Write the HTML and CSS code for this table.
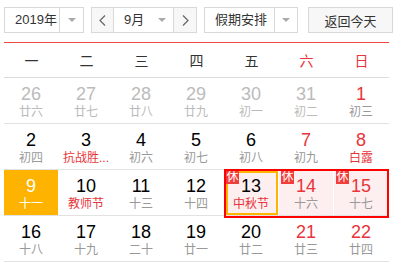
FILE: index.html
```html
<!DOCTYPE html>
<html lang="zh-CN">
<head>
<meta charset="utf-8">
<title>万年历</title>
<link rel="stylesheet" href="styles.css">
</head>
<body>
<div class="cal">
  <div class="toolbar">
    <div class="select year">
      <span class="sel-text">2019年</span>
      <span class="sel-arrow"><i class="tri"></i></span>
    </div>
    <div class="month-group">
      <span class="nav prev"><svg width="7" height="11" viewBox="0 0 7 11"><polyline points="6,0.5 1,5.5 6,10.5" fill="none" stroke="#666" stroke-width="1.2"/></svg></span>
      <span class="month">
        <span class="sel-text">9月</span>
        <span class="sel-arrow plain"><i class="tri"></i></span>
      </span>
      <span class="nav next"><svg width="7" height="11" viewBox="0 0 7 11"><polyline points="1,0.5 6,5.5 1,10.5" fill="none" stroke="#666" stroke-width="1.2"/></svg></span>
    </div>
    <div class="select holiday">
      <span class="sel-text">假期安排</span>
      <span class="sel-arrow"><i class="tri"></i></span>
    </div>
    <button class="today-btn">返回今天</button>
  </div>

  <div class="weekdays">
    <span>一</span><span>二</span><span>三</span><span>四</span><span>五</span><span class="wk-red">六</span><span class="wk-red">日</span>
  </div>

  <div class="week">
    <div class="cell other"><div class="num">26</div><div class="lunar">廿六</div></div>
    <div class="cell other"><div class="num">27</div><div class="lunar">廿七</div></div>
    <div class="cell other"><div class="num">28</div><div class="lunar">廿八</div></div>
    <div class="cell other"><div class="num">29</div><div class="lunar">廿九</div></div>
    <div class="cell other"><div class="num">30</div><div class="lunar">初一</div></div>
    <div class="cell other"><div class="num">31</div><div class="lunar">初二</div></div>
    <div class="cell weekend"><div class="num">1</div><div class="lunar">初三</div></div>
  </div>

  <div class="week">
    <div class="cell"><div class="num">2</div><div class="lunar">初四</div></div>
    <div class="cell"><div class="num">3</div><div class="lunar fest">抗战胜...</div></div>
    <div class="cell"><div class="num">4</div><div class="lunar">初六</div></div>
    <div class="cell"><div class="num">5</div><div class="lunar">初七</div></div>
    <div class="cell"><div class="num">6</div><div class="lunar">初八</div></div>
    <div class="cell weekend"><div class="num">7</div><div class="lunar">初九</div></div>
    <div class="cell weekend"><div class="num">8</div><div class="lunar fest">白露</div></div>
  </div>

  <div class="week">
    <div class="cell today"><div class="num">9</div><div class="lunar">十一</div></div>
    <div class="cell"><div class="num">10</div><div class="lunar fest">教师节</div></div>
    <div class="cell"><div class="num">11</div><div class="lunar">十三</div></div>
    <div class="cell"><div class="num">12</div><div class="lunar">十四</div></div>
    <div class="cell rest selected"><span class="badge">休</span><div class="num">13</div><div class="lunar fest">中秋节</div></div>
    <div class="cell rest weekend"><span class="badge">休</span><div class="num">14</div><div class="lunar">十六</div></div>
    <div class="cell rest weekend"><span class="badge">休</span><div class="num">15</div><div class="lunar">十七</div></div>
    <div class="range"></div>
  </div>

  <div class="week">
    <div class="cell"><div class="num">16</div><div class="lunar">十八</div></div>
    <div class="cell"><div class="num">17</div><div class="lunar">十九</div></div>
    <div class="cell"><div class="num">18</div><div class="lunar">二十</div></div>
    <div class="cell"><div class="num">19</div><div class="lunar">廿一</div></div>
    <div class="cell"><div class="num">20</div><div class="lunar">廿二</div></div>
    <div class="cell weekend"><div class="num">21</div><div class="lunar">廿三</div></div>
    <div class="cell weekend"><div class="num">22</div><div class="lunar">廿四</div></div>
  </div>
</div>
</body>
</html>
```

FILE: styles.css
```css
* {
  box-sizing: border-box;
  margin: 0;
  padding: 0;
}

body {
  font-family: Arial, "Liberation Sans", "Noto Sans CJK SC", sans-serif;
  background: #fff;
  color: #333;
  width: 393px;
  height: 263px;
  overflow: hidden;
}

.cal {
  padding: 7px 0 0 4px;
}

/* toolbar */
.toolbar {
  display: flex;
  height: 26px;
  font-size: 13px;
  line-height: 24px;
  color: #333;
}

.select {
  display: flex;
  height: 26px;
  border: 1px solid #d8d8d8;
  background: #fff;
}

.sel-text {
  flex: 1;
  padding-left: 10px;
  white-space: nowrap;
}

.sel-arrow {
  display: flex;
  align-items: center;
  justify-content: center;
  border-left: 1px solid #d8d8d8;
}

.sel-arrow.plain {
  border-left: 0;
  width: 22px;
}

.tri {
  display: block;
  width: 0;
  height: 0;
  border-left: 4px solid transparent;
  border-right: 4px solid transparent;
  border-top: 4px solid #aaa;
}

.year {
  width: 80px;
}

.year .sel-arrow {
  width: 24px;
}

.month-group {
  display: flex;
  margin-left: 7px;
  width: 106px;
  height: 26px;
  border: 1px solid #d8d8d8;
}

.nav {
  display: flex;
  align-items: center;
  justify-content: center;
  background: #f7f7f7;
}

.prev {
  width: 22px;
  border-right: 1px solid #d8d8d8;
}

.next {
  width: 23px;
  border-left: 1px solid #d8d8d8;
}

.month {
  display: flex;
  width: 59px;
  background: #fff;
}

.holiday {
  margin-left: 7px;
  width: 94px;
}

.holiday .sel-arrow {
  width: 23px;
}

.today-btn {
  margin-left: 10px;
  width: 85px;
  height: 26px;
  border: 1px solid #d8d8d8;
  background: #f7f7f7;
  font-family: inherit;
  font-size: 13px;
  color: #333;
  cursor: pointer;
}

/* weekday header */
.weekdays {
  margin-top: 9px;
  width: 385px;
  height: 36px;
  display: grid;
  grid-template-columns: repeat(7, 55px);
  align-items: center;
  text-align: center;
  border-top: 1px solid #f04a45;
  border-bottom: 1px solid #dcdcdc;
  font-size: 14px;
  color: #333;
}

.weekdays .wk-red {
  color: #e8343a;
}

/* weeks */
.week {
  position: relative;
  width: 385px;
  height: 46px;
  display: grid;
  grid-template-columns: repeat(7, 55px);
  border-bottom: 1px solid #e2e2e2;
}

.cell {
  position: relative;
  text-align: center;
  padding-top: 6px;
  border-right: 1px solid transparent;
  background-clip: padding-box;
}

.num {
  font-size: 18px;
  line-height: 20px;
  color: #000;
}

.lunar {
  font-size: 12px;
  line-height: 16px;
  color: #999;
  white-space: nowrap;
}

.lunar.fest {
  color: #e8343a;
}

.weekend .num {
  color: #e8343a;
}

.other .num {
  color: #bbb;
}

.other .lunar {
  color: #bbb;
}

.today {
  background-color: #fdb300;
}

.today .num,
.today .lunar {
  color: #fff;
}

.rest {
  background-color: #fdefef;
}

.badge {
  position: absolute;
  top: 1px;
  left: 2px;
  z-index: 2;
  width: 13px;
  height: 13px;
  background: #f23d3d;
  color: #fff;
  font-size: 12px;
  line-height: 13px;
  text-align: center;
}

.selected::after {
  content: "";
  position: absolute;
  top: 1px;
  left: 2px;
  right: 0;
  bottom: 0;
  border: 2px solid #ffb400;
}

.range {
  position: absolute;
  left: 220px;
  top: -1px;
  width: 165px;
  height: 49px;
  border: 2px solid #f00;
  z-index: 3;
  pointer-events: none;
}
```
